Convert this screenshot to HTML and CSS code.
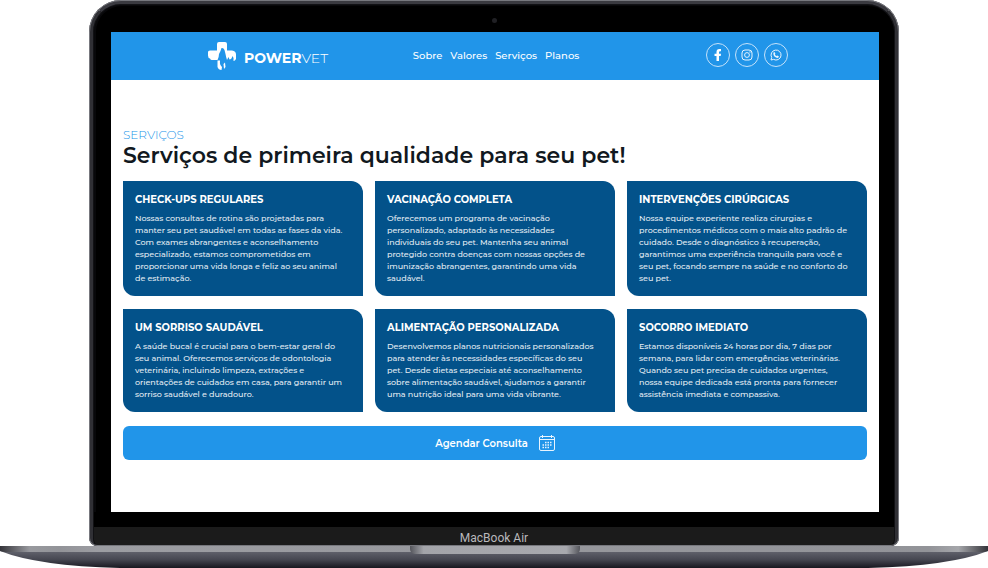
FILE: index.html
```html
<!DOCTYPE html>
<html lang="pt-BR">
<head>
<meta charset="utf-8">
<meta name="viewport" content="width=device-width, initial-scale=1">
<title>PowerVet</title>
<link rel="stylesheet" href="styles.css">
</head>
<body>
<div class="laptop">
  <div class="lid">
    <div class="camera"></div>
    <div class="screen">
      <header class="header">
        <a class="logo" href="#" aria-label="PowerVet">
          <svg class="logo-mark" viewBox="0 0 28 28" aria-hidden="true">
            <path fill="#fff" d="M9 2Q9 0 11 0H17Q19 0 19 2V8.500H24Q28 9 28 12.500V17Q27 19 25.500 19Q26 15.500 24.500 14Q23.500 17.500 21.500 17.500L20.500 15L19 18Q18 15 17.500 12L16.500 8Q15.500 5.500 13.500 6L12.500 9L11 12Q11 15 9.500 18H4Q2.500 18 2 16.500Q0 16 0 13.500V10Q0 8.500 2 8.500H9Z"/>
            <path fill="#fff" d="M9.500 18.500H12Q11.500 23 14 25L13.500 28Q10.500 28 9.500 25ZM15.500 22L17 20.500L17.500 25L16 27Z"/>
          </svg>
          <span class="logo-name"><b>POWER</b>VET</span>
        </a>
        <nav class="nav">
          <a href="#">Sobre</a>
          <a href="#">Valores</a>
          <a href="#">Serviços</a>
          <a href="#">Planos</a>
        </nav>
        <div class="social">
          <a href="#" aria-label="Facebook"><svg viewBox="0 0 12 12"><path fill="#fff" d="M4.500 12V7H2.500V4.700H4.500V3Q4.500 0 7.300 0H9V2.200H8Q7 2.200 7 3.200V4.700H9L8.700 7H7V12Z"/></svg></a>
          <a href="#" aria-label="Instagram"><svg viewBox="0 0 12 12" fill="none" stroke="#e8f4fe"><rect x="1" y="1" width="10" height="10" rx="3"/><circle cx="6" cy="6" r="2.400"/><circle cx="9" cy="3" r=".3"/></svg></a>
          <a href="#" aria-label="WhatsApp"><svg viewBox="0 0 12 12" fill="none" stroke="#e8f4fe"><path d="M1 11L1.700 8.500A5 5 0 1 1 3.600 10.400Z"/><path fill="#e8f4fe" stroke="none" d="M3.500 3.500L4.500 3L5.400 4.800L4.900 5.600Q5.500 6.600 6.500 7.100L7.300 6.500L9 7.500Q8.600 9 7.200 8.900Q3.600 8.200 3.300 4.800Z"/></svg></a>
        </div>
      </header>
      <main class="content">
        <p class="label">SERVIÇOS</p>
        <h1 class="title">Serviços de primeira qualidade para seu pet!</h1>
        <div class="cards">
          <article class="card">
            <h2>CHECK-UPS REGULARES</h2>
            <p>Nossas consultas de rotina são projetadas para<br>manter seu pet saudável em todas as fases da vida.<br>Com exames abrangentes e aconselhamento<br>especializado, estamos comprometidos em<br>proporcionar uma vida longa e feliz ao seu animal<br>de estimação.</p>
          </article>
          <article class="card">
            <h2>VACINAÇÃO COMPLETA</h2>
            <p>Oferecemos um programa de vacinação<br>personalizado, adaptado às necessidades<br>individuais do seu pet. Mantenha seu animal<br>protegido contra doenças com nossas opções de<br>imunização abrangentes, garantindo uma vida<br>saudável.</p>
          </article>
          <article class="card">
            <h2>INTERVENÇÕES CIRÚRGICAS</h2>
            <p>Nossa equipe experiente realiza cirurgias e<br>procedimentos médicos com o mais alto padrão de<br>cuidado. Desde o diagnóstico à recuperação,<br>garantimos uma experiência tranquila para você e<br>seu pet, focando sempre na saúde e no conforto do<br>seu pet.</p>
          </article>
          <article class="card">
            <h2>UM SORRISO SAUDÁVEL</h2>
            <p>A saúde bucal é crucial para o bem-estar geral do<br>seu animal. Oferecemos serviços de odontologia<br>veterinária, incluindo limpeza, extrações e<br>orientações de cuidados em casa, para garantir um<br>sorriso saudável e duradouro.</p>
          </article>
          <article class="card">
            <h2>ALIMENTAÇÃO PERSONALIZADA</h2>
            <p>Desenvolvemos planos nutricionais personalizados<br>para atender às necessidades específicas do seu<br>pet. Desde dietas especiais até aconselhamento<br>sobre alimentação saudável, ajudamos a garantir<br>uma nutrição ideal para uma vida vibrante.</p>
          </article>
          <article class="card">
            <h2>SOCORRO IMEDIATO</h2>
            <p>Estamos disponíveis 24 horas por dia, 7 dias por<br>semana, para lidar com emergências veterinárias.<br>Quando seu pet precisa de cuidados urgentes,<br>nossa equipe dedicada está pronta para fornecer<br>assistência imediata e compassiva.</p>
          </article>
        </div>
        <button class="cta" type="button">
          Agendar Consulta
          <svg viewBox="0 0 16 16" fill="none" stroke="#e8f4fe" aria-hidden="true"><rect x=".5" y="1.500" width="15" height="14" rx="1.500"/><path d="M.5 4.500H15.500M3.500 0V3M12.500 0V3"/><path stroke-width="1.500" stroke-dasharray="1.500 1" d="M6 7.500H13.500M3.500 10H13.500M3.500 12.500H11"/></svg>
        </button>
      </main>
    </div>
    <div class="chin">MacBook Air</div>
  </div>
  <div class="base">
    <svg viewBox="0 0 988 22" preserveAspectRatio="none" aria-hidden="true">
      <defs>
        <linearGradient id="under" x2="0" y2="1"><stop offset="0" stop-color="#62636d"/><stop offset=".5" stop-color="#464751"/><stop offset="1" stop-color="#17171f"/></linearGradient>
        <linearGradient id="edge"><stop offset="0" stop-color="#34343a"/><stop offset=".03" stop-color="#98999e"/><stop offset=".06" stop-color="#929398"/><stop offset=".1" stop-color="#9c9da2"/><stop offset=".94" stop-color="#929398"/><stop offset=".97" stop-color="#a5a6aa"/><stop offset="1" stop-color="#34343a"/></linearGradient>
      </defs>
      <path fill="url(#under)" d="M0 5Q38 20 120 22H868Q950 20 988 5Z"/>
      <path fill="url(#edge)" d="M0 0H988V5L984 6H4L0 5Z"/>
    </svg>
    <div class="notch"></div>
  </div>
</div>
</body>
</html>
```
FILE: styles.css
```css
* { box-sizing: border-box; }

body {
  margin: 0;
  background: #fff;
  font-family: Montserrat, Inter, sans-serif;
}

a { color: inherit; text-decoration: none; }
h1, h2, p { margin: 0; }

.lid {
  position: relative;
  width: 82%;
  margin: 0 auto;
  padding: 28px 16px 0;
  background: #000;
  border: 4px solid #303035;
  border-top-color: #3a3a40;
  border-bottom: 0;
  border-radius: 32px 32px 8px 8px;
  box-shadow: inset 0 0 0 1px #111114, inset 1px 0 0 2px #08080a;
  outline: 1px solid #77787e;
  outline-offset: -1px;
}

.camera {
  position: absolute;
  top: 14px;
  left: 50%;
  width: 5px;
  height: 5px;
  margin-left: -2px;
  border-radius: 50%;
  background: #202024;
}

.screen { background: #fff; margin: 0 0 0 2px; }

.header {
  display: grid;
  grid-template-columns: auto 1fr auto;
  align-items: center;
  height: 48px;
  padding: 0 91px 0 97px;
  background: #2195e9;
  color: #fff;
}

.logo { display: flex; align-items: center; gap: 8px; }
.logo-mark { width: 28px; height: 28px; }
.logo-name { font: 300 14px/20px Montserrat, Lato, sans-serif; padding-top: 4px; }
.logo-name b { font-weight: 700; }

.nav {
  display: flex;
  justify-content: center;
  gap: 8px;
  padding-right: 42px;
  font-size: 10px;
  font-weight: 500;
  line-height: 16px;
}

.social { display: flex; gap: 5px; margin-top: -3px; }
.social a {
  display: grid;
  place-items: center;
  width: 24px;
  height: 24px;
  border: 1px solid #c5e2fa;
  border-radius: 50%;
}
.social svg { width: 12px; height: 12px; }

.content { padding: 46px 12px 52px; }

.label {
  color: #2195e9;
  font-size: 12px;
  font-weight: 300;
  line-height: 18px;
}

.title {
  color: #111820;
  font-size: 22px;
  font-weight: 600;
  line-height: 24px;
  margin-bottom: 13px;
}

.cards {
  display: grid;
  grid-template-columns: repeat(3, minmax(0, 1fr));
  gap: 13px 12px;
}

.card {
  padding: 12px 0 12px 12px;
  background: #03528a;
  border-radius: 0 12px 0 12px;
  color: #e3edf4;
}
.card h2 {
  margin-bottom: 6px;
  color: #fff;
  font-size: 10px;
  font-weight: 700;
  line-height: 13px;
}
.card p {
  font-size: 8px;
  font-weight: 500;
  line-height: 12px;
  white-space: nowrap;
}

.cta {
  display: flex;
  align-items: center;
  justify-content: center;
  gap: 11px;
  width: 100%;
  height: 34px;
  margin-top: 14px;
  border: 0;
  border-radius: 6px;
  background: #2195e9;
  color: #fff;
  font-family: inherit;
  font-size: 10px;
  font-weight: 600;
}
.cta svg { width: 16px; height: 16px; }

.chin {
  height: 34px;
  margin: 0 -15px;
  padding-top: 4px;
  border-top: 15px solid #000;
  border-radius: 0 0 6px 6px;
  background: #1b1b1b;
  color: #b9b9bc;
  font-family: Roboto, sans-serif;
  font-size: 12px;
  line-height: 14px;
  text-align: center;
}

.base { position: relative; height: 22px; }
.base svg { display: block; width: 100%; height: 22px; }

.notch {
  position: absolute;
  top: 0;
  left: 50%;
  width: 170px;
  height: 8px;
  margin-left: -84px;
  border-radius: 0 0 5px 5px;
  background: linear-gradient(90deg, #55565c, #a3a4a9 8%, #a8a9ae 92%, #55565c);
}
```
